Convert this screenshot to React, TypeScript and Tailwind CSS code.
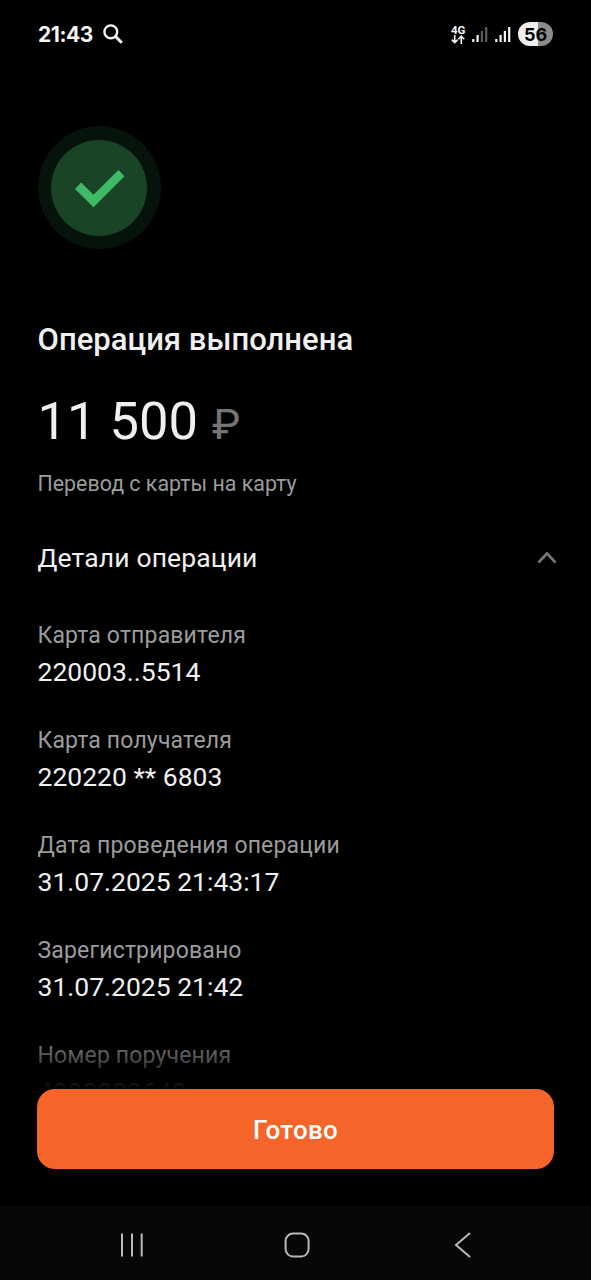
import { useState } from "react";

const details = [
  { label: "Карта отправителя", value: "220003..5514" },
  { label: "Карта получателя", value: "220220 ** 6803" },
  { label: "Дата проведения операции", value: "31.07.2025 21:43:17" },
  { label: "Зарегистрировано", value: "31.07.2025 21:42" },
  { label: "Номер поручения", value: "4000000640" },
];

function Signal({ level }: { level: number }) {
  const bars = [3, 7, 11, 15];
  return (
    <svg width="16" height="16" viewBox="0 0 16 16">
      {bars.map((h, i) => (
        <rect key={h} x={i * 4.3 + 0.2} y={16 - h} width="2.2" height={h} fill={i < level ? "#f2f2f2" : "#5c5c5c"} />
      ))}
    </svg>
  );
}

function StatusBar() {
  return (
    <div className="flex h-17 shrink-0 items-center justify-between pl-[38px] pr-[38px] text-[#f5f5f5]">
      <div className="flex items-center">
        <span className="w-[65px] pt-px font-[Inter] text-[21px] font-bold tracking-[-0.02em]">21:43</span>
        <svg width="20" height="20" viewBox="0 0 20 20" fill="none" stroke="currentColor" strokeWidth="2.4">
          <circle cx="7.8" cy="7.8" r="6.4" />
          <path d="M12.4 12.4l6.4 6.4" strokeWidth="3" />
        </svg>
      </div>
      <div className="flex items-center">
        <div className="flex w-[21px] flex-col items-start">
          <span className="font-[Roboto] text-[11.5px] leading-[10px] font-bold">4G</span>
          <svg width="14" height="9" viewBox="0 0 14 9" fill="none" stroke="currentColor" strokeWidth="1.6">
            <path d="M3.7 0v7.4M.8 4.6l2.9 3 2.9-3M10.3 9V1.4M7.4 4.2l2.9-3 2.9 3" />
          </svg>
        </div>
        <Signal level={2} />
        <div className="ml-[7px] mr-[7px]">
          <Signal level={4} />
        </div>
        <div className="flex h-6 w-[35px] items-center justify-center rounded-full bg-linear-to-r from-[#eeeeee] from-56% to-[#8c8c8c] to-56% font-[Inter] text-[18px] font-bold text-black">
          56
        </div>
      </div>
    </div>
  );
}

function NavBar() {
  return (
    <div className="flex h-[74px] shrink-0 items-center bg-[#070707] pt-[3px] pl-[120px] text-[#b9b9b9]">
      <svg width="24" height="26" viewBox="0 0 24 26" fill="none" stroke="currentColor" strokeWidth="2">
        <path d="M2 1.500v23M12 1.500v23M21.700 1.500v23" />
      </svg>
      <svg className="ml-[140px]" width="26" height="26" viewBox="0 0 26 26" fill="none" stroke="currentColor" strokeWidth="2">
        <rect x="1.600" y="1.600" width="23" height="23" rx="7.500" />
      </svg>
      <svg className="ml-[144px]" width="18" height="26" viewBox="0 0 18 26" fill="none" stroke="currentColor" strokeWidth="2">
        <path d="M16 1L2 13l14 12" />
      </svg>
    </div>
  );
}

export default function App() {
  const [open, setOpen] = useState(true);

  return (
    <div className="flex h-[1280px] w-[591px] flex-col overflow-hidden bg-black font-[Roboto,sans-serif] text-[#f0f0f0]">
      <StatusBar />

      <div className="relative h-[1021px] shrink-0 overflow-hidden pl-[37.5px] pr-[34px]">
        <div className="mt-[58px] flex size-[123px] items-center justify-center rounded-full bg-[#06130a]">
          <div className="flex size-24 items-center justify-center rounded-full bg-[#194425]">
            <svg className="mt-0.5 ml-0.5" width="50" height="38" viewBox="0 0 50 38" fill="#3fba67">
              <path d="M0 19l6.200-6.500L18.500 24.800 43.500 0l6 6.200L18.500 37.200z" />
            </svg>
          </div>
        </div>

        <h1 className="mt-[71px] text-[31px] leading-[40px] font-medium tracking-[0.001em]">Операция выполнена</h1>

        <div className="mt-[30px] flex items-baseline leading-[62px]">
          <span className="text-[52.5px]">11 500</span>
          <span className="ml-[14px] text-[42.500px] text-[#757575]">₽</span>
        </div>

        <p className="mt-[10px] text-[21.4px] leading-[36px] text-[#9c9c9c]">Перевод с карты на карту</p>

        <button onClick={() => setOpen(!open)} className="mt-[38px] flex h-9 w-full items-center justify-between">
          <span className="text-[26.5px] tracking-[0.005em]">Детали операции</span>
          <svg width="20" height="14" viewBox="0 0 20 14" fill="none" stroke="#777777" strokeWidth="2.600">
            <path d="M1.500 11.500L10 2.500l8.500 9" />
          </svg>
        </button>

        {open && (
          <div className="mt-[41px] flex flex-col gap-[33px]">
            {details.map((d) => (
              <div key={d.label}>
                <p className="text-[23px] leading-[37px] tracking-[0.007em] text-[#9c9c9c]">{d.label}</p>
                <p className="text-[26.5px] leading-[35px]">{d.value}</p>
              </div>
            ))}
          </div>
        )}

        <div className="absolute inset-x-0 bottom-0 h-[60px] bg-linear-to-b from-transparent to-black" />
      </div>

      <div className="flex-1 pl-[37px] pr-[37px]">
        <button className="h-20 w-full rounded-[18px] bg-[#f56428] pt-0.5 text-[26px] font-medium tracking-[0.01em] text-white">
          Готово
        </button>
      </div>

      <NavBar />
    </div>
  );
}
